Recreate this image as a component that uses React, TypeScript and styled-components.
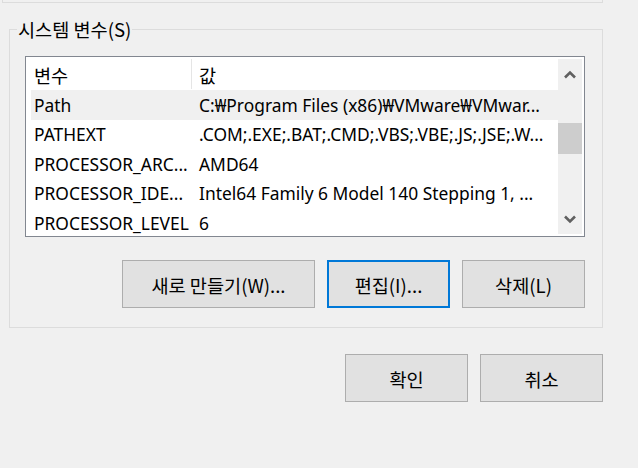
import React from "react";
import styled, { createGlobalStyle } from "styled-components";

const Global = createGlobalStyle`
  html, body { margin: 0; padding: 0; background: #f0f0f0; }
  body {
    width: 638px; height: 468px; overflow: hidden;
    font-family: "Noto Sans", "Noto Sans CJK KR", sans-serif;
    font-size: 17.4px; color: #000;
  }
  * { box-sizing: border-box; }
`;

const Page = styled.div`
  width: 638px;
  height: 468px;
  padding: 0 35px 0 9px;
  display: flex;
  flex-direction: column;
`;

const PrevGroup = styled.div`
  height: 3px;
  margin: 0 0 0 -7px;
  border: 1px solid #dcdcdc;
  border-top: none;
`;

const Group = styled.section`
  position: relative;
  margin-top: 26px;
  height: 299px;
  border: 1px solid #dcdcdc;
  padding: 26px 17px 0 15px;
  display: flex;
  flex-direction: column;
`;

const Ko = styled.span`
  font-family: "Noto Sans CJK KR", sans-serif;
  font-size: 18.6px;
`;

const Legend = styled.div`
  position: absolute;
  left: 7px;
  top: -13px;
  padding: 0 1px;
  line-height: 24px;
  background: #f0f0f0;
  white-space: nowrap;
`;

const ListBox = styled.div`
  height: 181px;
  border: 1px solid #828790;
  background: #fff;
  padding: 1px 2px 1px 1px;
  display: flex;
`;

const ListContent = styled.div`
  flex: 1;
  min-width: 0;
  overflow: hidden;
  display: flex;
  flex-direction: column;
`;

const Header = styled.div`
  height: 32px;
  flex: none;
  display: grid;
  grid-template-columns: 165px 1fr;
`;

const HeaderCell = styled.div<{ $divider?: boolean }>`
  display: flex;
  align-items: center;
  padding-left: 7px;
  border-right: ${(p) => (p.$divider ? "1px solid #e5e5e5" : "none")};
  margin: 1px 0;
`;

const Row = styled.div<{ $selected?: boolean }>`
  height: 29.5px;
  flex: none;
  margin-left: 4px;
  display: grid;
  grid-template-columns: 161px 1fr;
  align-items: center;
  background: ${(p) => (p.$selected ? "#f0f0f0" : "transparent")};
  white-space: nowrap;
`;

const NameCell = styled.div`
  padding-left: 3px;
  overflow: hidden;
`;

const ValueCell = styled.div`
  padding-left: 7px;
  overflow: hidden;
`;

const ScrollBar = styled.div`
  width: 24px;
  flex: none;
  margin: 1px 0;
  background: #f0f0f0;
  display: flex;
  flex-direction: column;
`;

const ArrowBox = styled.div`
  height: 30px;
  flex: none;
  display: flex;
  align-items: center;
  justify-content: center;
`;

const Track = styled.div`
  flex: 1;
  display: flex;
  flex-direction: column;
`;

const Thumb = styled.div`
  margin-top: 34px;
  height: 31px;
  background: #cdcdcd;
`;

const ButtonRow = styled.div`
  margin-top: 23px;
  display: flex;
  justify-content: flex-end;
  gap: 12px;
`;

const Button = styled.button<{ $w: number; $focused?: boolean }>`
  width: ${(p) => p.$w}px;
  height: 48px;
  background: #e1e1e1;
  border: ${(p) => (p.$focused ? "2px solid #0078d7" : "1px solid #adadad")};
  font: inherit;
  color: #000;
  padding: 0;
  display: flex;
  align-items: center;
  justify-content: center;
  white-space: nowrap;
`;

const Footer = styled.div`
  margin-top: 26px;
  display: flex;
  justify-content: flex-end;
  gap: 12px;
`;

const Chevron = ({ down }: { down?: boolean }) => (
  <svg width="12" height="9" viewBox="0 0 12 9">
    <path
      d={down ? "M1 1.5 L6 6.5 L11 1.5" : "M1 7.5 L6 2.5 L11 7.5"}
      fill="none"
      stroke="#606060"
      strokeWidth="2.6"
    />
  </svg>
);

const rows = [
  ["Path", "C:₩Program Files (x86)₩VMware₩VMwar..."],
  ["PATHEXT", ".COM;.EXE;.BAT;.CMD;.VBS;.VBE;.JS;.JSE;.W..."],
  ["PROCESSOR_ARC...", "AMD64"],
  ["PROCESSOR_IDE...", "Intel64 Family 6 Model 140 Stepping 1, ..."],
  ["PROCESSOR_LEVEL", "6"],
];

export default function App() {
  return (
    <>
      <Global />
      <Page>
        <PrevGroup />
        <Group>
          <Legend>
            <Ko>시스템 변수(S)</Ko>
          </Legend>
          <ListBox>
            <ListContent>
              <Header>
                <HeaderCell $divider>
                  <Ko>변수</Ko>
                </HeaderCell>
                <HeaderCell>
                  <Ko>값</Ko>
                </HeaderCell>
              </Header>
              {rows.map(([n, v], i) => (
                <Row key={n} $selected={i === 0}>
                  <NameCell>{n}</NameCell>
                  <ValueCell>{v}</ValueCell>
                </Row>
              ))}
            </ListContent>
            <ScrollBar>
              <ArrowBox>
                <Chevron />
              </ArrowBox>
              <Track>
                <Thumb />
              </Track>
              <ArrowBox>
                <Chevron down />
              </ArrowBox>
            </ScrollBar>
          </ListBox>
          <ButtonRow>
            <Button $w={193}>
              <Ko>새로 만들기(W)...</Ko>
            </Button>
            <Button $w={123} $focused>
              <Ko>편집(I)...</Ko>
            </Button>
            <Button $w={123}>
              <Ko>삭제(L)</Ko>
            </Button>
          </ButtonRow>
        </Group>
        <Footer>
          <Button $w={123}>
            <Ko>확인</Ko>
          </Button>
          <Button $w={123}>
            <Ko>취소</Ko>
          </Button>
        </Footer>
      </Page>
    </>
  );
}
